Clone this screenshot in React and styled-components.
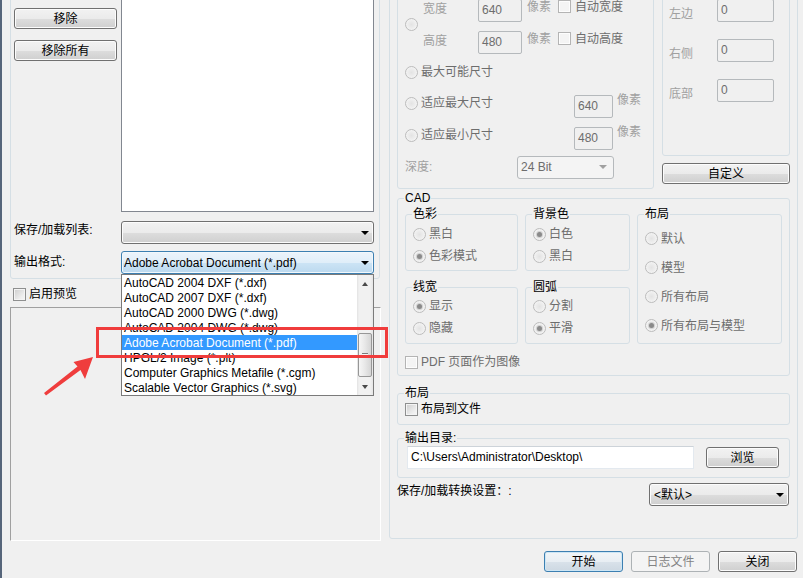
import React from "react";
import styled, { createGlobalStyle, css } from "styled-components";

const FONT = `"Liberation Sans", "Noto Sans CJK SC", sans-serif`;

const GlobalStyle = createGlobalStyle`
  * { box-sizing: border-box; }
  html, body { margin: 0; padding: 0; background: #f0f0f0; }
  body { font-family: ${FONT}; font-size: 12px; }
`;

const Window = styled.div`
  position: relative;
  width: 803px;
  height: 578px;
  overflow: hidden;
  background: #f0f0f0;
  border-left: 2px solid #56657a;
  padding-left: 8px;
  color: #000;
  font-family: ${FONT};
  font-size: 12px;
  line-height: 16px;
`;

const Main = styled.div`
  display: flex;
  align-items: flex-start;
  gap: 8px;
  margin-top: -30px;
`;

const LeftColumn = styled.div`
  display: flex;
  flex-direction: column;
  width: 371px;
`;

const Group = styled.div`
  border: 1px solid #d5dfe5;
  border-radius: 3px;
`;

const FileGroup = styled(Group)`
  margin-top: 10px;
  width: 370px;
  padding: 5px 5px 4px 3px;
  display: grid;
  grid-template-columns: 103px 253px;
  column-gap: 4px;
`;

const ButtonStack = styled.div`
  display: flex;
  flex-direction: column;
  gap: 11px;
  padding-top: 22px;
`;

const WinButton = styled.button`
  width: ${(p) => (p.$w ? `${p.$w}px` : "100%")};
  height: 21px;
  margin: 0;
  padding: 1px 0 0;
  font-family: ${FONT};
  font-size: 12px;
  line-height: 18px;
  color: #000;
  border: 1px solid #707070;
  border-radius: 3px;
  background: linear-gradient(#f2f2f2 0%, #ebebeb 50%, #dddddd 51%, #cfcfcf 100%);
  box-shadow: inset 0 0 0 1px #fcfcfc;
  ${(p) =>
    p.$default &&
    css`
      border-color: #3c7fb1;
      box-shadow: inset 0 0 0 1px #cde6f5;
      background: linear-gradient(#f1f5f8 0%, #e8eef3 50%, #d9e2ea 51%, #cdd8e2 100%);
    `}
  ${(p) =>
    p.disabled &&
    css`
      border-color: #adb2b5;
      background: #f4f4f4;
      box-shadow: none;
      color: #838383;
    `}
`;

const FileList = styled.div`
  height: 226px;
  background: #fff;
  border: 1px solid #828790;
`;

const FieldLabel = styled.div`
  align-self: end;
  margin-bottom: ${(p) => p.$mb}px;
  white-space: nowrap;
`;

const ComboSlot = styled.div`
  position: relative;
  margin-top: ${(p) => p.$mt}px;
`;

const Combo = styled.div`
  display: flex;
  align-items: center;
  width: ${(p) => (p.$w ? `${p.$w}px` : "100%")};
  height: 23px;
  padding: 0 4px 0 ${(p) => p.$pl ?? 3}px;
  border: 1px solid #707070;
  border-radius: 3px;
  background: linear-gradient(#f2f2f2 0%, #ebebeb 50%, #dddddd 51%, #cfcfcf 100%);
  box-shadow: inset 0 0 0 1px #fcfcfc;
  white-space: nowrap;
  ${(p) =>
    p.$focused &&
    css`
      border-color: #3c7fb1;
      background: linear-gradient(#ecf4fb 0%, #e0eef9 50%, #cce4f5 51%, #bcd9ef 100%);
      box-shadow: inset 0 0 0 1px #f2f8fc;
    `}
  ${(p) =>
    p.$disabled &&
    css`
      border-color: #b5b9bc;
      background: #f4f4f4;
      box-shadow: none;
      color: #6d6d6d;
      padding-right: 6px;
    `}
`;

const ComboText = styled.span`
  flex: 1;
  overflow: hidden;
`;

const ComboArrow = styled.span`
  margin-left: auto;
  width: 0;
  height: 0;
  border-left: 4px solid transparent;
  border-right: 4px solid transparent;
  border-top: 4px solid ${(p) => (p.$muted ? "#a0a0a0" : "#000")};
`;

const Popup = styled.div`
  position: absolute;
  top: 100%;
  left: 0;
  z-index: 3;
  display: flex;
  width: 253px;
  height: 122px;
  background: #fff;
  border: 1px solid #7a7a7a;
`;

const PopupItems = styled.div`
  width: 235px;
`;

const PopupItem = styled.div`
  height: 15px;
  line-height: 17px;
  padding-left: 2px;
  white-space: nowrap;
  overflow: hidden;
  ${(p) =>
    p.$selected &&
    css`
      background: #3399ff;
      color: #fff;
    `}
`;

const ScrollBar = styled.div`
  display: flex;
  flex-direction: column;
  width: 16px;
  background: linear-gradient(to right, #e2e2e2 0, #f1f1f1 2px, #f1f1f1 13px, #e6e6e6 16px);
`;

const ScrollArrow = styled.div`
  height: 17px;
  display: flex;
  align-items: center;
  justify-content: center;
  &::after {
    content: "";
    width: 0;
    height: 0;
    border-left: 3.5px solid transparent;
    border-right: 3.5px solid transparent;
    ${(p) =>
      p.$up
        ? css`border-bottom: 4px solid #4a4a4a;`
        : css`border-top: 4px solid #4a4a4a;`}
  }
`;

const ScrollTrack = styled.div`
  flex: 1;
  padding: 0 1px;
`;

const ScrollThumb = styled.div`
  margin-top: ${(p) => p.$top}px;
  height: ${(p) => p.$h}px;
  border: 1px solid #979797;
  border-radius: 2px;
  background: linear-gradient(to right, #f6f6f6 0%, #e9e9e9 45%, #d5d5d5 100%);
  display: flex;
  align-items: center;
  justify-content: center;
  &::after {
    content: "";
    width: 6px;
    height: 5px;
    background: repeating-linear-gradient(to bottom, #7b7b7b 0 1px, #f4f4f4 1px 2px);
  }
`;

const CheckBox = styled.span`
  flex: none;
  width: 13px;
  height: 13px;
  border: 1px solid ${(p) => (p.$disabled ? "#b4b4b4" : "#8e8f8f")};
  background: ${(p) =>
    p.$disabled ? "#f4f4f4" : "linear-gradient(135deg, #cdcdcd 0%, #eeeeee 70%, #f7f7f7 100%)"};
  box-shadow: inset 0 0 0 1px ${(p) => (p.$disabled ? "#fdfdfd" : "#f4f4f4")};
`;

const Radio = styled.span`
  flex: none;
  width: 13px;
  height: 13px;
  border-radius: 50%;
  border: 1px solid #bcbcbc;
  background: radial-gradient(circle, #e3e3e3 0%, #efefef 55%, #fbfbfb 100%);
  display: inline-flex;
  align-items: center;
  justify-content: center;
  &::after {
    content: "";
    display: ${(p) => (p.$checked ? "block" : "none")};
    width: 5px;
    height: 5px;
    border-radius: 50%;
    background: #8a8a8a;
    box-shadow: 0 0 0 1px #d2d2d2;
  }
`;

const Option = styled.div`
  display: flex;
  align-items: center;
  gap: 3px;
  height: ${(p) => (p.$h ? `${p.$h}px` : "auto")};
  width: ${(p) => (p.$w ? `${p.$w}px` : "auto")};
  flex: none;
  color: ${(p) => (p.$enabled ? "#000" : "#6d6d6d")};
  white-space: nowrap;
`;

const PreviewToggle = styled(Option)`
  height: 13px;
  margin: 9px 0 0 3px;
  line-height: 13px;
`;

const PreviewPane = styled.div`
  margin-top: 6px;
  height: 234px;
  border: 1px solid;
  border-color: #a0a0a0 #fff #fff #a0a0a0;
`;

const RightPanel = styled(Group)`
  width: 409px;
  margin-top: 2px;
  padding: 3px 7px 32px 7px;
`;

const TopSection = styled.div`
  display: flex;
  align-items: flex-start;
  gap: 8px;
`;

const SizeGroup = styled(Group)`
  width: 257px;
  padding: 16px 6px 5px 7px;
`;

const PairBlock = styled.div`
  display: flex;
  align-items: center;
  & > ${Radio} {
    margin: 0 5px 2px 0;
  }
`;

const Row = styled.div`
  display: flex;
  align-items: center;
  height: ${(p) => p.$h}px;
`;

const DimLabel = styled.span`
  flex: none;
  width: ${(p) => p.$w}px;
  margin-top: ${(p) => p.$mt ?? 0}px;
  color: #a0a0a0;
  white-space: nowrap;
`;

const Edit = styled.div`
  flex: none;
  width: ${(p) => p.$w}px;
  height: 23px;
  margin-top: ${(p) => p.$mt ?? 0}px;
  padding-left: 3px;
  line-height: 21px;
  color: #6d6d6d;
  background: #f0f0f0;
  border: 1px solid #b5b9bc;
  border-radius: 2px;
`;

const Unit = styled.span`
  flex: none;
  width: 26px;
  margin-left: ${(p) => p.$ml}px;
  margin-bottom: ${(p) => p.$lift}px;
  color: #a0a0a0;
  white-space: nowrap;
`;

const AutoOption = styled(Option)`
  gap: 4px;
  margin-left: 5px;
  margin-bottom: 5px;
`;

const MarginColumn = styled.div`
  display: flex;
  flex-direction: column;
  width: 128px;
`;

const MarginGroup = styled(Group)`
  display: flex;
  flex-direction: column;
  gap: 17px;
  padding: 22px 15px 53px 6px;
`;

const MarginRow = styled.div`
  display: flex;
  align-items: flex-start;
  height: 23px;
`;

const CustomButton = styled(WinButton)`
  margin-top: 7px;
`;

const Frame = styled.fieldset`
  margin: 0;
  min-width: 0;
  border: 1px solid #d5dfe5;
  border-radius: 3px;
  padding: ${(p) => p.$pad};
`;

const Caption = styled.legend`
  padding: 0 1px;
  margin-left: -1px;
  font-size: 12px;
  line-height: 14px;
  color: #000;
`;

const CadFrame = styled(Frame)`
  margin-top: 2px;
`;

const CadGrid = styled.div`
  display: grid;
  grid-template-columns: 113px 105px 145px;
  grid-template-rows: 64px 64px;
  column-gap: 7px;
  row-gap: 9px;
`;

const SubFrame = styled(Frame)`
  grid-column: ${(p) => p.$col};
  grid-row: ${(p) => p.$row};
`;

const CheckRow = styled(Option)`
  height: 13px;
  line-height: 13px;
  margin-top: ${(p) => p.$mt ?? 0}px;
`;

const LayoutFrame = styled(Frame)`
  margin-top: 10px;
`;

const OutputFrame = styled(Frame)`
  margin-top: 6px;
`;

const DirRow = styled.div`
  display: flex;
  align-items: center;
`;

const DirInput = styled.div`
  width: 287px;
  height: 23px;
  margin-left: 2px;
  padding-left: 3px;
  line-height: 21px;
  background: #fff;
  border: 1px solid;
  border-color: #cdd3d9 #e3e9ef #e3e9ef #e3e9ef;
  white-space: nowrap;
`;

const BrowseButton = styled(WinButton)`
  margin-left: 12px;
`;

const SaveRow = styled.div`
  display: flex;
  justify-content: space-between;
  align-items: flex-start;
  height: 23px;
  margin-top: 5px;
  padding-right: 1px;
  white-space: nowrap;
`;

const Footer = styled.div`
  display: flex;
  justify-content: flex-end;
  gap: 8px;
  margin-top: 10px;
  padding-right: 6px;
`;

const RedFrame = styled.div`
  position: absolute;
  left: 94px;
  top: 327px;
  width: 292px;
  height: 31px;
  border: 3px solid #f03c3c;
  z-index: 10;
`;

const PointerSvg = styled.svg`
  position: absolute;
  left: 38px;
  top: 350px;
  z-index: 10;
`;

const formats = [
  "AutoCAD 2004 DXF (*.dxf)",
  "AutoCAD 2007 DXF (*.dxf)",
  "AutoCAD 2000 DWG (*.dwg)",
  "AutoCAD 2004 DWG (*.dwg)",
  "Adobe Acrobat Document (*.pdf)",
  "HPGL/2 Image (*.plt)",
  "Computer Graphics Metafile (*.cgm)",
  "Scalable Vector Graphics (*.svg)",
];

function RadioOption({ label, checked, h, w }) {
  return (
    <Option $h={h} $w={w}>
      <Radio $checked={checked} />
      <span>{label}</span>
    </Option>
  );
}

export default function App() {
  return (
    <>
      <GlobalStyle />
      <Window>
        <Main>
          <LeftColumn>
            <FileGroup>
              <ButtonStack>
                <WinButton>移除</WinButton>
                <WinButton>移除所有</WinButton>
              </ButtonStack>
              <FileList />
              <FieldLabel $mb={6}>保存/加载列表:</FieldLabel>
              <ComboSlot $mt={9}>
                <Combo>
                  <ComboArrow />
                </Combo>
              </ComboSlot>
              <FieldLabel $mb={4}>输出格式:</FieldLabel>
              <ComboSlot $mt={7}>
                <Combo $focused $pl={2}>
                  <ComboText>Adobe Acrobat Document (*.pdf)</ComboText>
                  <ComboArrow />
                </Combo>
                <Popup>
                  <PopupItems>
                    {formats.map((f, i) => (
                      <PopupItem key={f} $selected={i === 4}>
                        {f}
                      </PopupItem>
                    ))}
                  </PopupItems>
                  <ScrollBar>
                    <ScrollArrow $up />
                    <ScrollTrack>
                      <ScrollThumb $top={41} $h={44} />
                    </ScrollTrack>
                    <ScrollArrow />
                  </ScrollBar>
                </Popup>
              </ComboSlot>
            </FileGroup>
            <PreviewToggle $enabled>
              <CheckBox />
              <span>启用预览</span>
            </PreviewToggle>
            <PreviewPane />
          </LeftColumn>

          <RightPanel>
            <TopSection>
              <SizeGroup>
                <PairBlock>
                  <Radio />
                  <div>
                    <Row $h={32}>
                      <DimLabel $w={55}>宽度</DimLabel>
                      <Edit $w={44} $mt={2}>640</Edit>
                      <Unit $ml={5} $lift={5}>像素</Unit>
                      <AutoOption>
                        <CheckBox $disabled />
                        <span>自动宽度</span>
                      </AutoOption>
                    </Row>
                    <Row $h={32}>
                      <DimLabel $w={55}>高度</DimLabel>
                      <Edit $w={44} $mt={2}>480</Edit>
                      <Unit $ml={5} $lift={5}>像素</Unit>
                      <AutoOption>
                        <CheckBox $disabled />
                        <span>自动高度</span>
                      </AutoOption>
                    </Row>
                  </div>
                </PairBlock>
                <Row $h={30}>
                  <RadioOption label="最大可能尺寸" />
                </Row>
                <Row $h={32}>
                  <RadioOption label="适应最大尺寸" w={169} />
                  <Edit $w={39} $mt={6}>640</Edit>
                  <Unit $ml={4} $lift={6}>像素</Unit>
                </Row>
                <Row $h={32}>
                  <RadioOption label="适应最小尺寸" w={169} />
                  <Edit $w={39} $mt={6}>480</Edit>
                  <Unit $ml={4} $lift={6}>像素</Unit>
                </Row>
                <Row $h={32}>
                  <DimLabel $w={112}>深度:</DimLabel>
                  <Combo $disabled $w={97}>
                    <ComboText>24 Bit</ComboText>
                    <ComboArrow $muted />
                  </Combo>
                </Row>
              </SizeGroup>

              <MarginColumn>
                <MarginGroup>
                  {["左边", "右侧", "底部"].map((side) => (
                    <MarginRow key={side}>
                      <DimLabel $w={48} $mt={7}>
                        {side}
                      </DimLabel>
                      <Edit $w={57}>0</Edit>
                    </MarginRow>
                  ))}
                </MarginGroup>
                <CustomButton>自定义</CustomButton>
              </MarginColumn>
            </TopSection>

            <CadFrame $pad="2px 7px 6px 7px">
              <Caption>CAD</Caption>
              <CadGrid>
                <SubFrame $col="1" $row="1" $pad="2px 4px 0 7px">
                  <Caption>色彩</Caption>
                  <RadioOption label="黑白" h={22} />
                  <RadioOption label="色彩模式" checked h={22} />
                </SubFrame>
                <SubFrame $col="2" $row="1" $pad="2px 4px 0 7px">
                  <Caption>背景色</Caption>
                  <RadioOption label="白色" checked h={22} />
                  <RadioOption label="黑白" h={22} />
                </SubFrame>
                <SubFrame $col="3" $row="1 / span 2" $pad="3px 4px 0 7px">
                  <Caption>布局</Caption>
                  <RadioOption label="默认" h={29} />
                  <RadioOption label="模型" h={29} />
                  <RadioOption label="所有布局" h={29} />
                  <RadioOption label="所有布局与模型" checked h={29} />
                </SubFrame>
                <SubFrame $col="1" $row="2" $pad="1px 4px 0 7px">
                  <Caption>线宽</Caption>
                  <RadioOption label="显示" checked h={22} />
                  <RadioOption label="隐藏" h={22} />
                </SubFrame>
                <SubFrame $col="2" $row="2" $pad="1px 4px 0 7px">
                  <Caption>圆弧</Caption>
                  <RadioOption label="分割" h={22} />
                  <RadioOption label="平滑" checked h={22} />
                </SubFrame>
              </CadGrid>
              <CheckRow $mt={12}>
                <CheckBox $disabled />
                <span>PDF 页面作为图像</span>
              </CheckRow>
            </CadFrame>

            <LayoutFrame $pad="3px 7px 8px 7px">
              <Caption>布局</Caption>
              <CheckRow $enabled>
                <CheckBox />
                <span>布局到文件</span>
              </CheckRow>
            </LayoutFrame>

            <OutputFrame $pad="1px 10px 8px 7px">
              <Caption>输出目录:</Caption>
              <DirRow>
                <DirInput>C:\Users\Administrator\Desktop\</DirInput>
                <BrowseButton $w={73}>浏览</BrowseButton>
              </DirRow>
            </OutputFrame>

            <SaveRow>
              <span>保存/加载转换设置：:</span>
              <Combo $w={140} $pl={4}>
                <ComboText>&lt;默认&gt;</ComboText>
                <ComboArrow />
              </Combo>
            </SaveRow>
          </RightPanel>
        </Main>

        <Footer>
          <WinButton $w={79} $default>
            开始
          </WinButton>
          <WinButton $w={79} disabled>
            日志文件
          </WinButton>
          <WinButton $w={79}>关闭</WinButton>
        </Footer>

        <RedFrame />
        <PointerSvg width="60" height="50" viewBox="0 0 60 50">
          <polygon
            points="53,7 33.5,12 37.5,16.5 4,43 6,45.5 40.5,20 45,29"
            fill="#ef3d3d"
          />
        </PointerSvg>
      </Window>
    </>
  );
}
